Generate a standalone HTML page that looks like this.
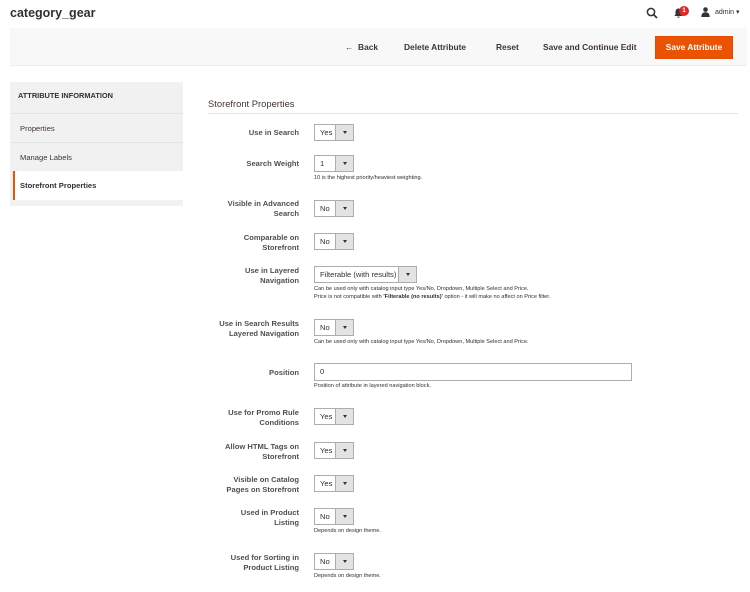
<!DOCTYPE html>
<html><head><style>
*{margin:0;padding:0;box-sizing:border-box}
body{width:750px;height:592px;background:#fff;font-family:"Liberation Sans",sans-serif;color:#303030;position:relative;overflow:hidden}
.a{position:absolute;white-space:nowrap}
.lbl{position:absolute;right:451px;text-align:right;font-size:7.6px;line-height:9.5px;color:#303030;font-weight:bold;opacity:.85}
.sel{position:absolute;left:314px;width:40px;height:17px;border:1px solid #adadad;background:#fff;font-size:7.6px;line-height:15px;padding-left:5px}
.sel:after{content:"";position:absolute;right:0;top:0;width:17px;height:15px;background:#e3e3e3;border-left:1px solid #adadad}
.sel:before{content:"";position:absolute;right:6px;top:6px;border-left:2.5px solid transparent;border-right:2.5px solid transparent;border-top:3px solid #333;z-index:2}
.note{position:absolute;left:314px;font-size:5.6px;line-height:8px;color:#303030;white-space:nowrap}
.nav{position:absolute;left:20px;font-size:7.6px;color:#41362f}
.btn{position:absolute;top:42px;font-size:8.4px;font-weight:bold;color:#41362f}
</style></head><body>
<div class="a" style="left:10px;top:6px;font-size:12.5px;font-weight:bold;color:#303030">category_gear</div>
<svg class="a" style="left:646px;top:7px" width="12" height="12" viewBox="0 0 12 12"><circle cx="5" cy="5" r="3.6" fill="none" stroke="#333" stroke-width="1.5"/><path d="M7.6 7.6L11 11" stroke="#333" stroke-width="1.7"/></svg>
<svg class="a" style="left:674px;top:8px" width="9" height="10" viewBox="0 0 9 10"><path d="M4.5 0.5C2.5 0.5 1.5 2 1.5 4V6.5L0.3 8H8.7L7.5 6.5V4C7.5 2 6.5 0.5 4.5 0.5Z M3.3 8.6a1.2 1.2 0 0 0 2.4 0Z" fill="#333"/></svg>
<div class="a" style="left:679px;top:6px;width:10px;height:10px;border-radius:5px;background:#e22626;color:#fff;font-size:6.5px;text-align:center;line-height:10px;font-weight:bold">1</div>
<svg class="a" style="left:701px;top:7px" width="9" height="10" viewBox="0 0 9 10"><circle cx="4.5" cy="2.6" r="2.3" fill="#333"/><path d="M0.3 10C0.3 6.5 2 5.2 4.5 5.2S8.7 6.5 8.7 10Z" fill="#333"/></svg>
<div class="a" style="left:715px;top:8px;font-size:7px;color:#333">admin ▾</div>
<div class="a" style="left:10px;top:28px;width:737px;height:38px;background:#f8f8f8;border-bottom:1px solid #eee"></div>
<div class="btn" style="left:345px">&#8592;&nbsp; Back</div>
<div class="btn" style="left:404px">Delete Attribute</div>
<div class="btn" style="left:496px">Reset</div>
<div class="btn" style="left:543px">Save and Continue Edit</div>
<div class="a" style="left:655px;top:36px;width:78px;height:23px;background:#eb5202;border:1px solid #e04f00;color:#fff;font-size:8.4px;font-weight:bold;text-align:center;line-height:21px">Save Attribute</div>
<div class="a" style="left:10px;top:82px;width:173px;height:124px;background:#f1f1f1"></div>
<div class="a" style="left:18px;top:91px;font-size:7.4px;font-weight:bold;color:#303030">ATTRIBUTE INFORMATION</div>
<div class="a" style="left:10px;top:113px;width:173px;height:1px;background:#e3e3e3"></div>
<div class="nav" style="top:124px">Properties</div>
<div class="a" style="left:10px;top:142px;width:173px;height:1px;background:#e3e3e3"></div>
<div class="nav" style="top:153px">Manage Labels</div>
<div class="a" style="left:13px;top:171px;width:170px;height:29px;background:#fff;border-left:2px solid #eb5202"></div>
<div class="nav" style="top:181px;font-weight:bold;color:#303030">Storefront Properties</div>
<div class="a" style="left:208px;top:98px;font-size:9.4px;color:#41362f">Storefront Properties</div>
<div class="a" style="left:208px;top:113px;width:530px;height:1px;background:#e3e3e3"></div>

<div class="lbl" style="top:128px">Use in Search</div><div class="sel" style="top:124px">Yes</div>
<div class="lbl" style="top:159px">Search Weight</div><div class="sel" style="top:155px">1</div>
<div class="note" style="top:174px">10 is the highest priority/heaviest weighting.</div>
<div class="lbl" style="top:199px">Visible in Advanced<br>Search</div><div class="sel" style="top:200px">No</div>
<div class="lbl" style="top:233px">Comparable on<br>Storefront</div><div class="sel" style="top:233px">No</div>
<div class="lbl" style="top:266px">Use in Layered<br>Navigation</div><div class="sel" style="top:266px;width:103px">Filterable (with results)</div>
<div class="note" style="top:285px">Can be used only with catalog input type Yes/No, Dropdown, Multiple Select and Price.<br>Price is not compatible with <b>'Filterable (no results)'</b> option - it will make no affect on Price filter.</div>
<div class="lbl" style="top:319px">Use in Search Results<br>Layered Navigation</div><div class="sel" style="top:319px">No</div>
<div class="note" style="top:338px">Can be used only with catalog input type Yes/No, Dropdown, Multiple Select and Price.</div>
<div class="lbl" style="top:368px">Position</div>
<div class="a" style="left:314px;top:363px;width:318px;height:18px;border:1px solid #adadad;font-size:7.6px;line-height:16px;padding-left:5px">0</div>
<div class="note" style="top:382px">Position of attribute in layered navigation block.</div>
<div class="lbl" style="top:408px">Use for Promo Rule<br>Conditions</div><div class="sel" style="top:408px">Yes</div>
<div class="lbl" style="top:442px">Allow HTML Tags on<br>Storefront</div><div class="sel" style="top:442px">Yes</div>
<div class="lbl" style="top:475px">Visible on Catalog<br>Pages on Storefront</div><div class="sel" style="top:475px">Yes</div>
<div class="lbl" style="top:508px">Used in Product<br>Listing</div><div class="sel" style="top:508px">No</div>
<div class="note" style="top:527px">Depends on design theme.</div>
<div class="lbl" style="top:553px">Used for Sorting in<br>Product Listing</div><div class="sel" style="top:553px">No</div>
<div class="note" style="top:572px">Depends on design theme.</div>
</body></html>
